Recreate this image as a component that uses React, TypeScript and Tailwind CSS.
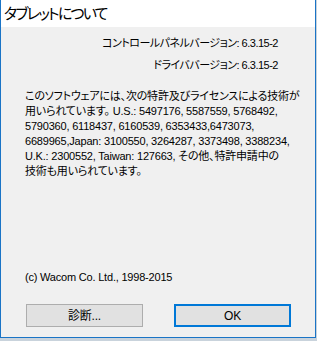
import React from "react";

const font = "[font-family:'Liberation_Sans','Noto_Sans_CJK_JP',sans-serif] [font-feature-settings:'palt']";

export default function App() {
  return (
    <div className={`w-[317px] h-[341px] bg-[#c9d3dc] ${font} text-black`}>
      <div className="flex h-[338px] w-[316px] flex-col border-x border-b border-[#1a74c6] bg-[#f0f0f0]">
        {/* title bar */}
        <div className="flex h-[27px] items-center bg-white pl-[3px] text-[15px] leading-none tracking-[-1.8px]">
          タブレットについて
        </div>

        <div className="flex flex-1 flex-col px-[24px] text-[11px] tracking-[-0.2px] whitespace-nowrap">
          <div className="mt-[9px] flex flex-col items-end gap-[7px] pr-[13px] leading-[15px] tracking-[-0.5px]">
            <div>コントロールパネルバージョン: 6.3.15-2</div>
            <div>ドライババージョン: 6.3.15-2</div>
          </div>

          <p className="mt-[16px] leading-[15px]">
            このソフトウェアには、次の特許及びライセンスによる技術が
            <br />
            用いられています。 U.S.: 5497176, 5587559, 5768492,
            <br />
            5790360, 6118437, 6160539, 6353433,6473073,
            <br />
            6689965,Japan: 3100550, 3264287, 3373498, 3388234,
            <br />
            U.K.: 2300552, Taiwan: 127663, その他、特許申請中の
            <br />
            技術も用いられています。
          </p>

          <div className="mt-auto leading-[15px]">(c) Wacom Co. Ltd., 1998-2015</div>

          <div className="mb-[10px] mt-[19px] flex gap-[31px] pl-[1px]">
            <button className="h-[23px] w-[118px] border border-[#adadad] bg-[#e1e1e1] text-[12px] leading-none">
              診断...
            </button>
            <button className="h-[23px] w-[118px] border-2 border-[#0078d7] bg-[#e1e1e1] text-[12px] leading-none">
              OK
            </button>
          </div>
        </div>
      </div>
    </div>
  );
}
